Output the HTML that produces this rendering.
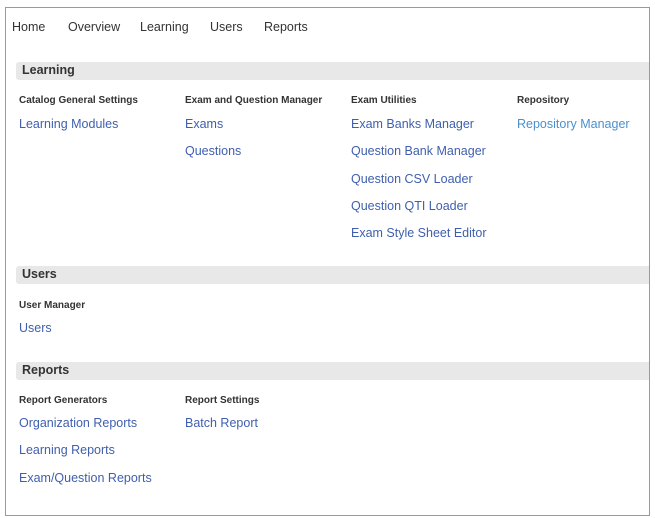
<!DOCTYPE html>
<html><head><meta charset="utf-8"><style>
body{margin:0;width:655px;height:518px;background:#fff;font-family:"Liberation Sans",sans-serif;position:relative;overflow:hidden}
.box{position:absolute;left:5px;top:7px;width:643px;height:507px;border:1px solid #9a9a9a}
.a{position:absolute;white-space:nowrap}
.nav{font-size:12.5px;color:#333;top:20px}
.bar{position:absolute;left:16px;width:633px;height:18px;background:#e8e8e8;border-radius:3px 0 0 3px}
.bt{position:absolute;left:22px;font-size:12.5px;font-weight:bold;color:#333}
.h{font-size:10px;font-weight:bold;color:#333}
.l{font-size:12.5px;color:#3f5fae}
</style></head><body>
<div class="box"></div>
<div class="a nav" style="left:12px">Home</div>
<div class="a nav" style="left:68px">Overview</div>
<div class="a nav" style="left:140px">Learning</div>
<div class="a nav" style="left:210px">Users</div>
<div class="a nav" style="left:264px">Reports</div>

<div class="bar" style="top:62px"></div><div class="a bt" style="top:63px">Learning</div>
<div class="a h" style="left:19px;top:95px">Catalog General Settings</div>
<div class="a h" style="left:185px;top:95px">Exam and Question Manager</div>
<div class="a h" style="left:351px;top:95px">Exam Utilities</div>
<div class="a h" style="left:517px;top:95px">Repository</div>
<div class="a l" style="left:19px;top:117px">Learning Modules</div>
<div class="a l" style="left:185px;top:117px">Exams</div>
<div class="a l" style="left:185px;top:144px">Questions</div>
<div class="a l" style="left:351px;top:117px">Exam Banks Manager</div>
<div class="a l" style="left:351px;top:144px">Question Bank Manager</div>
<div class="a l" style="left:351px;top:172px">Question CSV Loader</div>
<div class="a l" style="left:351px;top:199px">Question QTI Loader</div>
<div class="a l" style="left:351px;top:226px">Exam Style Sheet Editor</div>
<div class="a l" style="left:517px;top:117px;color:#4a90d0">Repository Manager</div>

<div class="bar" style="top:266px"></div><div class="a bt" style="top:267px">Users</div>
<div class="a h" style="left:19px;top:300px">User Manager</div>
<div class="a l" style="left:19px;top:321px">Users</div>

<div class="bar" style="top:362px"></div><div class="a bt" style="top:363px">Reports</div>
<div class="a h" style="left:19px;top:395px">Report Generators</div>
<div class="a h" style="left:185px;top:395px">Report Settings</div>
<div class="a l" style="left:19px;top:416px">Organization Reports</div>
<div class="a l" style="left:19px;top:443px">Learning Reports</div>
<div class="a l" style="left:19px;top:471px">Exam/Question Reports</div>
<div class="a l" style="left:185px;top:416px">Batch Report</div>
</body></html>
